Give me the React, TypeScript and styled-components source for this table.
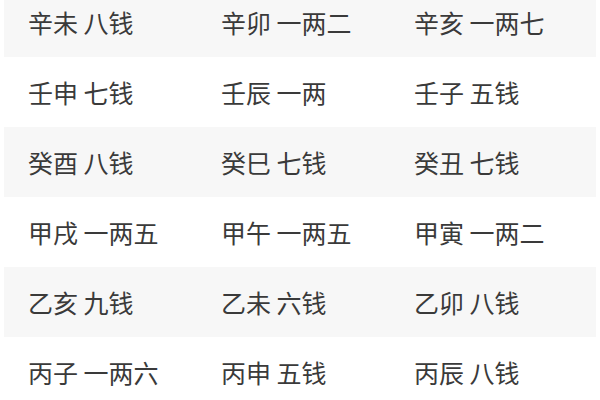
import React, { FC } from 'react'
import styled, { createGlobalStyle } from 'styled-components'

const GlobalStyle = createGlobalStyle`
    html, body {
        margin: 0;
        padding: 0;
        background: #ffffff;
        overflow: hidden;
    }
`

const Page = styled.div`
    width: 600px;
    height: 400px;
    overflow: hidden;
    background: #ffffff;
    padding: 0 4px;
    box-sizing: border-box;
`

const Table = styled.div`
    display: flex;
    flex-direction: column;
    margin-top: -13px;
`

const Row = styled.div<{ $shaded: boolean }>`
    display: grid;
    grid-template-columns: 193px 193px 1fr;
    height: 70px;
    align-items: center;
    background: ${(p) => (p.$shaded ? '#f7f7f7' : '#ffffff')};
`

const Cell = styled.div`
    padding-left: 24px;
    font-family: 'Noto Sans CJK SC', 'Noto Sans', sans-serif;
    font-size: 25px;
    color: #3a3a3a;
    white-space: nowrap;
`

const rows: string[][] = [
    ['辛未 八钱', '辛卯 一两二', '辛亥 一两七'],
    ['壬申 七钱', '壬辰 一两', '壬子 五钱'],
    ['癸酉 八钱', '癸巳 七钱', '癸丑 七钱'],
    ['甲戌 一两五', '甲午 一两五', '甲寅 一两二'],
    ['乙亥 九钱', '乙未 六钱', '乙卯 八钱'],
    ['丙子 一两六', '丙申 五钱', '丙辰 八钱'],
]

const App: FC = () => {
    return (
        <Page>
            <GlobalStyle />
            <Table>
                {rows.map((row, i) => (
                    <Row key={i} $shaded={i % 2 === 0}>
                        {row.map((text) => (
                            <Cell key={text}>{text}</Cell>
                        ))}
                    </Row>
                ))}
            </Table>
        </Page>
    )
}

export default App
